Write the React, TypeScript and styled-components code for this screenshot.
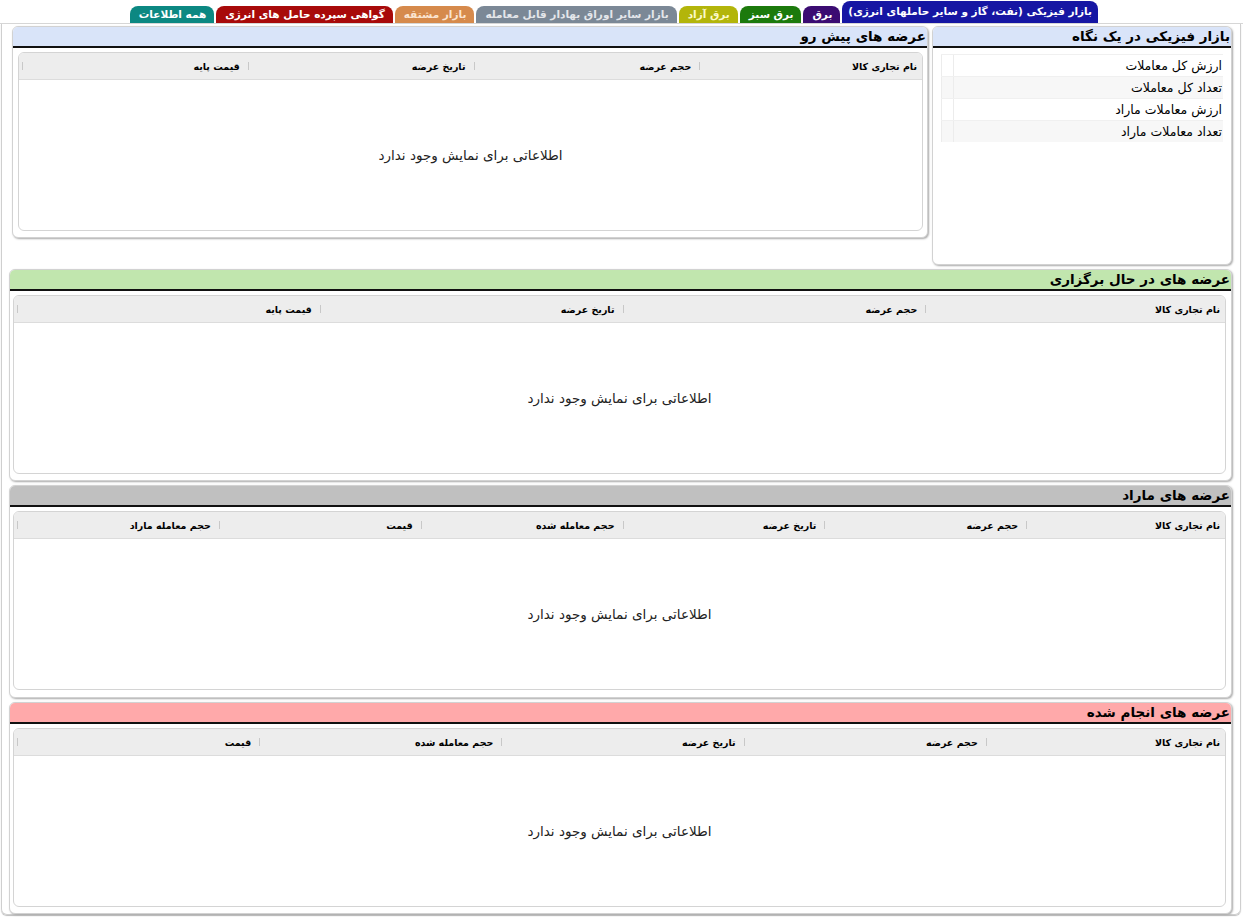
import styled, { createGlobalStyle } from "styled-components";

const GlobalStyle = createGlobalStyle`
  html, body {
    margin: 0;
    padding: 0;
    background: #fff;
  }
  body {
    font-family: "DejaVu Sans", Tahoma, sans-serif;
    color: #000;
  }
`;

const Page = styled.div`
  direction: rtl;
  width: 1243px;
  height: 918px;
  overflow: hidden;
`;

const TabBar = styled.div`
  display: flex;
  align-items: flex-end;
  gap: 2px;
  height: 24px;
  padding-right: 145px;
  border-bottom: 1px solid #d6d6d6;
  box-sizing: border-box;
`;

const Tab = styled.div<{ $bg: string; $fg?: string; $active?: boolean }>`
  height: ${(p) => (p.$active ? "22px" : "17px")};
  padding: ${(p) => (p.$active ? "3px 6px 0" : "1px 8px 0 9px")};
  box-sizing: border-box;
  background: ${(p) => p.$bg};
  color: ${(p) => p.$fg ?? "#fff"};
  border-radius: 8px 8px 0 0;
  font-size: 10.5px;
  font-weight: bold;
  white-space: nowrap;
  line-height: 15px;
`;

const Frame = styled.div`
  margin: 0 2px 0 1px;
  height: 891px;
  box-sizing: border-box;
  border: 1px solid #cfcfcf;
  border-top: none;
  border-radius: 0 0 6px 6px;
  box-shadow: 0 1px 1px #bdbdbd;
  padding: 2px 8px 0 7px;
  display: flex;
  flex-direction: column;
  gap: 4px;
`;

const TopRow = styled.div`
  display: flex;
  align-items: flex-start;
  gap: 4px;
  padding-left: 3px;
`;

const Panel = styled.div<{ $width?: string; $height: number }>`
  ${(p) => (p.$width ? `width: ${p.$width};` : "flex: 1;")}
  height: ${(p) => p.$height}px;
  flex-shrink: 0;
  box-sizing: border-box;
  border: 1px solid #d2d2d2;
  border-radius: 6px;
  box-shadow: 1px 1px 2px #a9a9a9;
  overflow: hidden;
  background: #fff;
`;

const PanelHeader = styled.div<{ $bg: string }>`
  height: 21px;
  box-sizing: border-box;
  background: ${(p) => p.$bg};
  border-bottom: 2px solid #111;
  padding-right: 1px;
  font-size: 13.5px;
  font-weight: bold;
  line-height: 19px;
  white-space: nowrap;
`;

const TableBox = styled.div<{ $right: number; $left: number }>`
  margin: 4px ${(p) => p.$right}px 0 ${(p) => p.$left}px;
  height: 179px;
  box-sizing: border-box;
  border: 1px solid #d4d4d4;
  border-radius: 6px;
  overflow: hidden;
  display: flex;
  flex-direction: column;
`;

const HeadRow = styled.div<{ $cols: number }>`
  display: grid;
  grid-template-columns: repeat(${(p) => p.$cols}, 1fr);
  height: 26px;
  flex: none;
  background: #ededed;
  border-bottom: 1px solid #dcdcdc;
`;

const HeadCell = styled.div`
  position: relative;
  padding-right: 5px;
  font-size: 9.5px;
  font-weight: bold;
  line-height: 27px;
  white-space: nowrap;
  &::after {
    content: "";
    position: absolute;
    left: 3px;
    top: 9px;
    width: 1px;
    height: 8px;
    background: #c8c8c8;
  }
`;

const EmptyBody = styled.div`
  flex: 1;
  display: flex;
  align-items: center;
  justify-content: center;
  font-size: 13.5px;
  color: #222;
`;

const Glance = styled.div`
  margin: 6px 8px 0 8px;
  display: flex;
  flex-direction: column;
`;

const GlanceRow = styled.div<{ $shade: boolean }>`
  display: flex;
  height: 21px;
  background: ${(p) => (p.$shade ? "#f7f7f7" : "#fff")};
  border-top: 1px solid #f0f0f0;
`;

const GlanceLabel = styled.div`
  flex: 1;
  padding-right: 1px;
  font-size: 12.5px;
  line-height: 21px;
  border-left: 1px solid #ececec;
`;

const GlanceValue = styled.div`
  width: 11px;
  border-left: 1px solid #ececec;
`;

type Tone = { label: string; bg: string; fg?: string; active?: boolean };

const tabs: Tone[] = [
  { label: "بازار فیزیکی (نفت، گاز و سایر حاملهای انرژی)", bg: "#1616a3", active: true },
  { label: "برق", bg: "#3b0c72" },
  { label: "برق سبز", bg: "#1c7a0c" },
  { label: "برق آزاد", bg: "#b3b50a", fg: "#fbf9c8" },
  { label: "بازار سایر اوراق بهادار قابل معامله", bg: "#7b8896", fg: "#e4e6ea" },
  { label: "بازار مشتقه", bg: "#d68a4c", fg: "#fbe4d0" },
  { label: "گواهی سپرده حامل های انرژی", bg: "#a80a0a" },
  { label: "همه اطلاعات", bg: "#0c8882" },
];

const glanceRows = [
  "ارزش کل معاملات",
  "تعداد کل معاملات",
  "ارزش معاملات ماراد",
  "تعداد معاملات ماراد",
];

const sections = [
  {
    title: "عرضه های در حال برگزاری",
    bg: "#c1e6ae",
    height: 212,
    cols: ["نام تجاری کالا", "حجم عرضه", "تاریخ عرضه", "قیمت پایه"],
  },
  {
    title: "عرضه های ماراد",
    bg: "#c0c0c0",
    height: 211,
    cols: ["نام تجاری کالا", "حجم عرضه", "تاریخ عرضه", "حجم معامله شده", "قیمت", "حجم معامله ماراد"],
  },
  {
    title: "عرضه های انجام شده",
    bg: "#ffa9aa",
    height: 209,
    cols: ["نام تجاری کالا", "حجم عرضه", "تاریخ عرضه", "حجم معامله شده", "قیمت"],
  },
];

const EMPTY = "اطلاعاتی برای نمایش وجود ندارد";

function DataTable({ cols, right, left }: { cols: string[]; right: number; left: number }) {
  return (
    <TableBox $right={right} $left={left}>
      <HeadRow $cols={cols.length}>
        {cols.map((c) => (
          <HeadCell key={c}>{c}</HeadCell>
        ))}
      </HeadRow>
      <EmptyBody>{EMPTY}</EmptyBody>
    </TableBox>
  );
}

export default function App() {
  return (
    <>
      <GlobalStyle />
      <Page>
        <TabBar>
          {tabs.map((t) => (
            <Tab key={t.label} $bg={t.bg} $fg={t.fg} $active={t.active}>
              {t.label}
            </Tab>
          ))}
        </TabBar>
        <Frame>
          <TopRow>
            <Panel $width="300px" $height={239}>
              <PanelHeader $bg="#d9e4f9">بازار فیزیکی در یک نگاه</PanelHeader>
              <Glance>
                {glanceRows.map((r, i) => (
                  <GlanceRow key={r} $shade={i % 2 === 1}>
                    <GlanceLabel>{r}</GlanceLabel>
                    <GlanceValue />
                  </GlanceRow>
                ))}
              </Glance>
            </Panel>
            <Panel $height={212}>
              <PanelHeader $bg="#d9e4f9">عرضه های پیش رو</PanelHeader>
              <DataTable right={4} left={5} cols={["نام تجاری کالا", "حجم عرضه", "تاریخ عرضه", "قیمت پایه"]} />
            </Panel>
          </TopRow>
          {sections.map((s) => (
            <Panel key={s.title} $height={s.height}>
              <PanelHeader $bg={s.bg}>{s.title}</PanelHeader>
              <DataTable right={5} left={3} cols={s.cols} />
            </Panel>
          ))}
        </Frame>
      </Page>
    </>
  );
}
